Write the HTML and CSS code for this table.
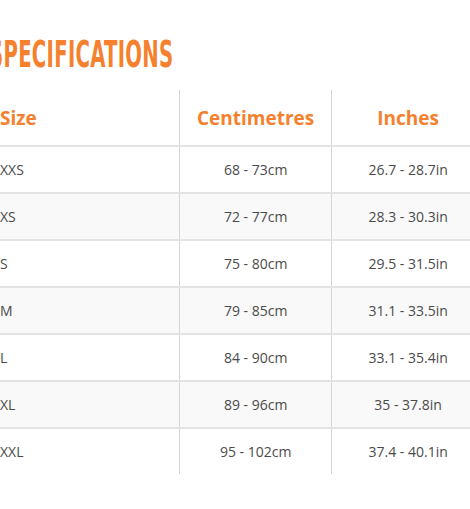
FILE: index.html
```html
<!DOCTYPE html>
<html>
<head>
<meta charset="utf-8">
<link rel="stylesheet" href="styles.css">
</head>
<body>
<div class="page">
  <h2 class="title"><span class="title-text">SPECIFICATIONS</span></h2>
  <table class="spec">
    <thead>
      <tr><th class="c1">Size</th><th>Centimetres</th><th>Inches</th></tr>
    </thead>
    <tbody>
      <tr><td class="c1">XXS</td><td>68 - 73cm</td><td>26.7 - 28.7in</td></tr>
      <tr class="alt"><td class="c1">XS</td><td>72 - 77cm</td><td>28.3 - 30.3in</td></tr>
      <tr><td class="c1">S</td><td>75 - 80cm</td><td>29.5 - 31.5in</td></tr>
      <tr class="alt"><td class="c1">M</td><td>79 - 85cm</td><td>31.1 - 33.5in</td></tr>
      <tr><td class="c1">L</td><td>84 - 90cm</td><td>33.1 - 35.4in</td></tr>
      <tr class="alt"><td class="c1">XL</td><td>89 - 96cm</td><td>35 - 37.8in</td></tr>
      <tr class="last"><td class="c1">XXL</td><td>95 - 102cm</td><td>37.4 - 40.1in</td></tr>
    </tbody>
  </table>
</div>
</body>
</html>
```

FILE: styles.css
```css
html, body {
  margin: 0;
  padding: 0;
  background: #ffffff;
  overflow: hidden;
}
.page {
  width: 470px;
  height: 509px;
  overflow: hidden;
  font-family: "Open Sans", "DejaVu Sans", sans-serif;
}
.title {
  margin: 0;
  padding-top: 31px;
  height: 49px;
  margin-left: -11px;
  font-family: "DejaVu Sans", sans-serif;
  font-weight: bold;
  font-stretch: condensed;
  font-size: 38px;
  line-height: 46px;
  color: #f5812e;
  white-space: nowrap;
}
.title-text {
  display: inline-block;
  transform: scaleX(0.575);
  transform-origin: left center;
  letter-spacing: 0.5px;
}
.spec {
  margin-left: -20px;
  margin-top: 10px;
  border-collapse: collapse;
  table-layout: fixed;
  width: 504px;
}
.spec th, .spec td {
  border-left: 1px solid #d6d6d6;
  text-align: center;
  padding: 0;
}
.spec .c1 {
  border-left: none;
  text-align: left;
  padding-left: 20px;
  width: 179px;
}
.spec th {
  height: 55px;
  font-size: 19px;
  font-weight: 700;
  color: #f5812e;
  border-bottom: 2px solid #e3e3e3;
}
.spec td {
  height: 45px;
  font-size: 14px;
  color: #4a4a4a;
  border-bottom: 2px solid #e3e3e3;
}
.spec tr.alt td {
  background: #f9f9f9;
}
.spec tr.last td {
  border-bottom: none;
}
```
